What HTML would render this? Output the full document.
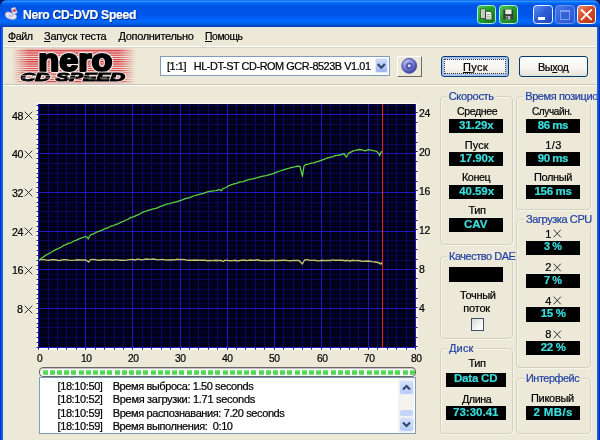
<!DOCTYPE html>
<html><head><meta charset="utf-8"><title>Nero CD-DVD Speed</title>
<style>
html,body{margin:0;padding:0}
body{width:600px;height:440px;overflow:hidden;position:relative;background:#ece9d8;font-family:"Liberation Sans","DejaVu Sans",sans-serif;font-size:11px;color:#000}
.abs{position:absolute}
.t{position:absolute;white-space:pre;transform-origin:0 0;-webkit-text-stroke:0.22px currentColor}
#title{position:absolute;left:0;top:0;width:600px;height:27px;border-radius:7px 7px 0 0;
background:linear-gradient(to bottom,#0058ee 0%,#3593ff 4%,#288eff 6%,#127dff 8%,#036ffc 10%,#0262ee 14%,#0057e5 20%,#0054e3 24%,#0055eb 56%,#005bf5 66%,#026afe 76%,#0062ef 86%,#0052d6 92%,#0048c4 96%,#003cae 100%)}
#bl,#br{position:absolute;top:27px;width:4px;height:413px}
#bl{left:0;width:3px;background:linear-gradient(to right,#0019cf,#0855dd 40%,#166aee)}#br{left:597.2px;width:2.8px;background:linear-gradient(to right,#166aee,#0855dd 50%,#001ea0)}
.sep{position:absolute;left:3px;width:593px;height:1px}
.grp{position:absolute;border:1px solid #d2d0be;border-radius:4px;box-shadow:inset 1px 1px 0 #f6f5ec,1px 1px 0 #f6f5ec}
.legbg{position:absolute;height:13px;background:#ece9d8}
.box{position:absolute;background:#000}
.chk{position:absolute;width:11px;height:11px;border:1px solid #3c5068;background:linear-gradient(135deg,#d8d8d2,#fff 80%)}
#prog{position:absolute;left:39px;top:367px;width:375px;height:8px;border:1px solid #686868;border-radius:4px;background:#fff;box-shadow:inset 0 1px 1px #bbb}
#pb{position:absolute;left:0;top:0;width:414.6px;height:440px;overflow:hidden}
#pb i{position:absolute;top:369.8px;width:5px;height:5.4px;background:linear-gradient(to bottom,#8ae88a,#48d448 50%,#78e278)}
#log{position:absolute;left:39px;top:377px;width:375px;height:55px;border:1px solid #7f9db9;background:#fff}
.btn{position:absolute;height:19px;border:1px solid #003c74;border-radius:3px;background:linear-gradient(to bottom,#fff 0%,#f6f5ef 60%,#e4e1d4 100%)}
</style></head><body>
<div id="wrap" style="position:absolute;left:0;top:0;width:600px;height:440px;will-change:transform">
<div class="abs" style="left:0;top:0;width:600px;height:10px;background:#0a1a60"></div><div id="title"></div>
<svg class="abs" style="left:4px;top:6px" width="16" height="16" viewBox="0 0 16 16">
<path d="M1 8.5c0-2 2-3 4-2.6l5 1.6c2 .8 3.4 2.4 2.4 4.4-1 1.800-4 2.200-6.400 1.400C3.200 12.500 1 11 1 8.500z" fill="#e4e4f0" stroke="#7a86c0" stroke-width="0.7"/>
<path d="M7 2.500l4-1.500 2.500 5.500-4.500 2.500z" fill="#f4f0f4" stroke="#8088b8" stroke-width="0.6"/>
<circle cx="10.300" cy="4.600" r="1.700" fill="#c8505a"/>
<ellipse cx="6.500" cy="10" rx="2.200" ry="1.200" fill="#c0c4dc"/>
</svg>
<div class="t" style="left:23.0px;top:6.3px;font-size:13.5px;line-height:18px;height:18px;letter-spacing:-0.35px;transform:scaleX(0.902);font-weight:bold;color:#fff;text-shadow:1px 1px 0 #0a2a7a;">Nero CD-DVD Speed</div>
<!-- title buttons -->
<div class="abs" style="left:477px;top:5px;width:17px;height:17px;border-radius:3.5px;background:linear-gradient(135deg,#4cc84e 0%,#24a02e 45%,#12781c 100%);border:1px solid #b0eedc"></div>
<div class="abs" style="left:499px;top:5px;width:17px;height:17px;border-radius:3.5px;background:linear-gradient(135deg,#4cc84e 0%,#24a02e 45%,#12781c 100%);border:1px solid #b0eedc"></div>
<svg class="abs" style="left:477px;top:5px" width="42" height="19" viewBox="477 5 42 19">
<rect x="480.6" y="9" width="5" height="9.4" fill="#f0f4e8" stroke="#1c4a1c" stroke-width="0.7"/>
<path d="M481.3 11h3.6M481.3 13h3.6M481.3 15h3.6M481.3 17h3.6" stroke="#7c8c78" stroke-width="0.8"/>
<path d="M485.6 11.2h4.4l2 2v6.8h-6.4z" fill="#f6f6ee" stroke="#183818" stroke-width="0.9"/>
<path d="M486.6 14.5h4.2M486.6 16.3h4.2M486.6 18.1h4.2" stroke="#8a9886" stroke-width="0.8"/>
<rect x="503.3" y="9.5" width="10" height="10" rx="0.6" fill="#3a4038"/>
<rect x="505.3" y="9.5" width="6.2" height="4.6" fill="#e6ece2"/>
<rect x="505.8" y="16" width="4.6" height="3.5" fill="#b4bcb0"/><rect x="506.5" y="16.6" width="1.4" height="2.4" fill="#3a4038"/>
</svg>
<div class="abs" style="left:533px;top:5px;width:18px;height:17px;border-radius:3.5px;border:1px solid #eef2ff;background:linear-gradient(135deg,#5c8cf4 0%,#2e5fd8 45%,#1e48bc 100%)"></div>
<div class="abs" style="left:538px;top:16.5px;width:6.5px;height:3.2px;background:#fff"></div>
<div class="abs" style="left:555px;top:5px;width:17.5px;height:17px;border-radius:3.5px;border:1px solid #6f95ec;background:linear-gradient(135deg,#4a7cec 0%,#3464dc 45%,#2a56cc 100%)"></div>
<div class="abs" style="left:559.5px;top:9.8px;width:8.8px;height:7.2px;border:1px solid #7d9ff0;border-top-width:2.2px"></div>
<div class="abs" style="left:576.5px;top:5px;width:17.5px;height:17px;border-radius:3.5px;border:1px solid #fff;background:linear-gradient(135deg,#ec8a68 0%,#d84c2a 45%,#b43412 100%)"></div>
<svg class="abs" style="left:576px;top:5px" width="20" height="19" viewBox="576 5 20 19"><path d="M581.6 10l9.6 9.4M591.2 10l-9.6 9.4" stroke="#fff" stroke-width="1.8" stroke-linecap="round"/></svg>
<!-- menu -->
<div class="t" style="left:8.0px;top:29.2px;font-size:11px;line-height:14px;height:14px;letter-spacing:-0.45px;transform:scaleX(0.971);"><u>Ф</u>айл</div>
<div class="t" style="left:44.0px;top:29.2px;font-size:11px;line-height:14px;height:14px;letter-spacing:-0.21px;"><u>З</u>апуск теста</div>
<div class="t" style="left:118.5px;top:29.2px;font-size:11px;line-height:14px;height:14px;letter-spacing:-0.32px;"><u>Д</u>ополнительно</div>
<div class="t" style="left:205.0px;top:29.2px;font-size:11px;line-height:14px;height:14px;letter-spacing:-0.45px;transform:scaleX(0.943);"><u>П</u>омощь</div>
<div class="sep" style="top:46px;background:#fff"></div>
<div class="sep" style="top:47px;background:#d8d4c4"></div>
<!-- logo -->
<svg class="abs" style="left:12px;top:48px" width="124" height="36" viewBox="0 0 124 36">
<defs><linearGradient id="fd" x1="0" x2="1" y1="0" y2="0"><stop offset="0" stop-color="#ece9d8" stop-opacity="1"/><stop offset="0.14" stop-color="#ece9d8" stop-opacity="0"/><stop offset="0.86" stop-color="#ece9d8" stop-opacity="0"/><stop offset="1" stop-color="#ece9d8" stop-opacity="1"/></linearGradient>
<pattern id="st" width="4" height="2.2" patternUnits="userSpaceOnUse"><rect width="4" height="2.2" fill="#f0e4e4"/><rect width="4" height="1.2" fill="#d83838"/></pattern></defs>
<rect x="0" y="0.800" width="124" height="34.400" fill="url(#st)"/>
<rect x="0" y="0" width="124" height="36" fill="url(#fd)"/>
<text x="26.3" y="23.4" font-family="Liberation Sans, sans-serif" font-weight="bold" font-size="31" textLength="74.2" lengthAdjust="spacingAndGlyphs" fill="#000" stroke="#f6ecec" stroke-width="4" stroke-linejoin="round">nero</text>
<text x="26.3" y="23.4" font-family="Liberation Sans, sans-serif" font-weight="bold" font-size="31" textLength="74.2" lengthAdjust="spacingAndGlyphs" fill="#000" stroke="#000" stroke-width="2.2" stroke-linejoin="round">nero</text>
<text x="8.5" y="33.3" font-family="Liberation Sans, sans-serif" font-weight="bold" font-style="italic" font-size="11.5" textLength="104.5" lengthAdjust="spacingAndGlyphs" fill="#000" stroke="#f4e8e8" stroke-width="2.4" stroke-linejoin="round">CD SPEED</text>
<text x="8.5" y="33.3" font-family="Liberation Sans, sans-serif" font-weight="bold" font-style="italic" font-size="11.5" textLength="104.5" lengthAdjust="spacingAndGlyphs" fill="#000" stroke="#000" stroke-width="1">CD SPEED</text>
<path d="M10 27.600h14M33 27.600h12M56 27.600h10M72 27.600h10M10 30h12M33 30h10M55 30h9M72 30h8M88 30h7M101 30h6" stroke="#f4ecec" stroke-width="0.7" opacity="0.85"/>
</svg>
<!-- combobox -->
<div class="abs" style="left:160px;top:56px;width:228px;height:18px;border:1px solid #7f9db9;background:#fff"></div>
<div class="t" style="left:167.0px;top:59.4px;font-size:11px;line-height:14px;height:14px;letter-spacing:-0.45px;transform:scaleX(0.991);">[1:1]&nbsp;&nbsp; HL-DT-ST CD-ROM GCR-8523B V1.01</div>
<div class="abs" style="left:374.5px;top:57.7px;width:13.5px;height:15.5px;border-radius:2px;background:linear-gradient(to bottom,#cfdcfc,#b4c8f6 60%,#98b0ea);box-shadow:inset 0 0 0 1px #e4ecfe"></div>
<svg class="abs" style="left:373px;top:58px" width="15" height="16"><path d="M4.700 6l3.600 3.800L11.900 6" stroke="#31456f" stroke-width="2.100" fill="none"/></svg>
<!-- cd button -->
<div class="abs" style="left:397px;top:56px;width:23px;height:18.500px;border-top:1px solid #fff;border-left:1px solid #fff;border-right:1.500px solid #6e6b60;border-bottom:1.500px solid #6e6b60;background:#ece9d8"></div>
<svg class="abs" style="left:400px;top:57px" width="18" height="18" viewBox="0 0 18 18"><defs><radialGradient id="cd" cx="0.380" cy="0.320" r="0.750"><stop offset="0" stop-color="#c4ccf4"/><stop offset="0.450" stop-color="#8088d8"/><stop offset="0.800" stop-color="#4a50b4"/><stop offset="1" stop-color="#34389a"/></radialGradient></defs>
<circle cx="9.200" cy="8.800" r="7.500" fill="url(#cd)" stroke="#3a3e9c" stroke-width="0.700"/><circle cx="9.200" cy="8.800" r="3.100" fill="#5a60bc" stroke="#3c409c" stroke-width="0.600"/><circle cx="9.200" cy="8.800" r="1.300" fill="#f4f4fc"/></svg>
<!-- buttons -->
<div class="btn" style="left:441px;top:56px;width:66px;box-shadow:inset 0 0 0 2px #a9c0f0"></div>
<div class="abs" style="left:444px;top:59px;width:60px;height:13px;border:1px dotted #333"></div>
<div class="btn" style="left:519px;top:56px;width:67px"></div>
<div class="t" style="left:463.0px;top:59.7px;font-size:11px;line-height:14px;height:14px;letter-spacing:0.35px;"><u>П</u>уск</div><div class="t" style="left:538.0px;top:59.7px;font-size:11px;line-height:14px;height:14px;letter-spacing:-0.45px;transform:scaleX(0.995);">Вы<u>х</u>од</div>
<div class="sep" style="top:84px;background:#c8c4b4"></div>
<div class="sep" style="top:85px;background:#fff"></div>
<!-- chart -->
<svg style="position:absolute;left:36px;top:102px" width="383" height="249" viewBox="36 102 383 249">
<rect x="36.5" y="102.8" width="381.2" height="246.8" fill="#fbfaf4"/>
<rect x="38.5" y="104" width="377.5" height="244" fill="#000016"/>
<path d="M36.6 347.5H38.5M36.6 342.5H38.5M36.6 337.5H38.5M36.6 332.5H38.5M36.6 327.5H38.5M36.6 323.5H38.5M36.6 318.5H38.5M36.6 313.5H38.5M36.6 308.5H38.5M36.6 303.5H38.5M36.6 298.5H38.5M36.6 294.5H38.5M36.6 289.5H38.5M36.6 284.5H38.5M36.6 279.5H38.5M36.6 274.5H38.5M36.6 269.5H38.5M36.6 265.5H38.5M36.6 260.5H38.5M36.6 255.5H38.5M36.6 250.5H38.5M36.6 245.5H38.5M36.6 240.5H38.5M36.6 235.5H38.5M36.6 231.5H38.5M36.6 226.5H38.5M36.6 221.5H38.5M36.6 216.5H38.5M36.6 211.5H38.5M36.6 206.5H38.5M36.6 202.5H38.5M36.6 197.5H38.5M36.6 192.5H38.5M36.6 187.5H38.5M36.6 182.5H38.5M36.6 177.5H38.5M36.6 173.5H38.5M36.6 168.5H38.5M36.6 163.5H38.5M36.6 158.5H38.5M36.6 153.5H38.5M36.6 148.5H38.5M36.6 144.5H38.5M36.6 139.5H38.5M36.6 134.5H38.5M36.6 129.5H38.5M36.6 124.5H38.5M36.6 119.5H38.5M36.6 114.5H38.5M36.6 110.5H38.5M36.6 105.5H38.5M38.5 348V349.6M48.5 348V349.6M57.5 348V349.6M66.5 348V349.6M76.5 348V349.6M85.5 348V349.6M95.5 348V349.6M104.5 348V349.6M114.5 348V349.6M123.5 348V349.6M132.5 348V349.6M142.5 348V349.6M151.5 348V349.6M161.5 348V349.6M170.5 348V349.6M180.5 348V349.6M189.5 348V349.6M198.5 348V349.6M208.5 348V349.6M217.5 348V349.6M227.5 348V349.6M236.5 348V349.6M245.5 348V349.6M255.5 348V349.6M264.5 348V349.6M274.5 348V349.6M283.5 348V349.6M293.5 348V349.6M302.5 348V349.6M311.5 348V349.6M321.5 348V349.6M330.5 348V349.6M340.5 348V349.6M349.5 348V349.6M358.5 348V349.6M368.5 348V349.6M377.5 348V349.6M387.5 348V349.6M396.5 348V349.6M406.5 348V349.6M415.5 348V349.6M416 346.5H417.6M416 337.5H417.6M416 327.5H417.6M416 317.5H417.6M416 307.5H417.6M416 298.5H417.6M416 288.5H417.6M416 278.5H417.6M416 268.5H417.6M416 259.5H417.6M416 249.5H417.6M416 239.5H417.6M416 229.5H417.6M416 220.5H417.6M416 210.5H417.6M416 200.5H417.6M416 190.5H417.6M416 181.5H417.6M416 171.5H417.6M416 161.5H417.6M416 151.5H417.6M416 142.5H417.6M416 132.5H417.6M416 122.5H417.6M416 112.5H417.6" stroke="#14146c" stroke-width="1" fill="none"/>
<path d="M38.5 342.5H416M38.5 332.5H416M38.5 323.5H416M38.5 313.5H416M38.5 303.5H416M38.5 294.5H416M38.5 284.5H416M38.5 274.5H416M38.5 265.5H416M38.5 255.5H416M38.5 245.5H416M38.5 235.5H416M38.5 226.5H416M38.5 216.5H416M38.5 206.5H416M38.5 197.5H416M38.5 187.5H416M38.5 177.5H416M38.5 168.5H416M38.5 158.5H416M38.5 148.5H416M38.5 139.5H416M38.5 129.5H416M38.5 119.5H416M38.5 110.5H416" stroke="#03033a" stroke-width="1" fill="none"/>
<path d="M48.5 104V348M57.5 104V348M66.5 104V348M76.5 104V348M95.5 104V348M104.5 104V348M114.5 104V348M123.5 104V348M142.5 104V348M151.5 104V348M161.5 104V348M170.5 104V348M189.5 104V348M198.5 104V348M208.5 104V348M217.5 104V348M236.5 104V348M245.5 104V348M255.5 104V348M264.5 104V348M283.5 104V348M293.5 104V348M302.5 104V348M311.5 104V348M330.5 104V348M340.5 104V348M349.5 104V348M358.5 104V348M377.5 104V348M387.5 104V348M396.5 104V348M406.5 104V348" stroke="#09096a" stroke-width="1" fill="none"/>
<path d="M38.5 337.5H416M38.5 327.5H416M38.5 318.5H416M38.5 298.5H416M38.5 289.5H416M38.5 279.5H416M38.5 260.5H416M38.5 250.5H416M38.5 240.5H416M38.5 221.5H416M38.5 211.5H416M38.5 202.5H416M38.5 182.5H416M38.5 173.5H416M38.5 163.5H416M38.5 144.5H416M38.5 134.5H416M38.5 124.5H416M38.5 105.5H416" stroke="#07075e" stroke-width="1" fill="none"/>
<path d="M38.5 104V348M85.5 104V348M132.5 104V348M180.5 104V348M227.5 104V348M274.5 104V348M321.5 104V348M368.5 104V348M415.5 104V348M38.5 347.5H416M38.5 308.5H416M38.5 269.5H416M38.5 231.5H416M38.5 192.5H416M38.5 153.5H416M38.5 114.5H416" stroke="#1e18c6" stroke-width="1" fill="none"/>
<polyline points="39,260 41.5,259.62 44,259.6 48,260.4 51.5,259.75 55,259.8 57.5,260.3 60,260.5 63.0,259.67 66,259.7 69.0,260.09 72,260.4 74.7,260.13 77.3,259.69 80,260 83.0,260.01 86,260 88.6,262 90.5,259.6 93.7,259.37 96.8,260.0 100,260.3 102.5,259.74 105.0,259.64 107.5,259.85 110,259.8 112.5,260.25 115.0,259.67 117.5,259.9 120,260.3 122.5,260.25 125.0,260.4 127.5,259.85 130,259.6 132.5,259.47 135.0,260.03 137.5,259.07 140,259.5 142.5,259.83 145.0,259.24 147.5,259.07 150,259.4 152.5,259.07 155.0,259.31 157.5,259.87 160,259.6 162.5,259.38 165.0,259.88 167.5,260.04 170,260 172.5,259.77 175.0,259.85 177.5,259.26 180,259.6 182.5,259.33 185.0,259.66 187.5,260.31 190,260.3 192.5,260.2 195.0,260.06 197.5,260.31 200,260.2 202.5,260.23 205.0,260.15 207.5,260.72 210,260.5 212.8,260.67 215.5,260.19 218.2,260.5 221,260.4 223,261.5 225,260.3 227.5,260.36 230.0,260.74 232.5,260.63 235.0,260.22 237.5,260.95 240,260.5 242.5,260.07 245.0,260.32 247.5,260.61 250.0,259.95 252.5,260.24 255,260.2 257.5,259.79 260.0,260.47 262.5,260.61 265.0,260.47 267.5,260.83 270,260.5 272.5,260.28 275.0,260.63 277.5,260.49 280.0,260.45 282.5,260.29 285,260.3 287.8,260.66 290.6,260.78 293.4,260.33 296.2,260.54 299,260.4 302.4,264 304.5,260 307.1,259.64 309.8,260.35 312.4,260.37 315,260.3 317.5,260.87 320.0,260.77 322.5,260.31 325,260.6 327.5,260.39 330.0,260.57 332.5,259.82 335,260.2 337.5,260.31 340.0,260.17 342.5,260.27 345,260.8 347.5,260.31 350.0,260.97 352.5,260.28 355,260.6 357.5,260.5 360.0,260.79 362.5,261.42 365,261.2 368.5,260.98 372,261.6 375.0,262.0 378,262.5 381,264 382,262.5" stroke="#c4c46c" stroke-width="1.4" fill="none" stroke-linejoin="round"/>
<polyline points="39,260 43,257.2 45.5,255.36 48,254 50.7,252.57 53.3,250.95 56,249.6 58.5,248.44 61.0,247.21 63.5,245.46 66,244.6 68.5,243.11 71.0,242.8 73.5,241.23 76,240.4 78.5,239.06 81,238.2 85.5,236.5 87,237.2 88.2,239 89.5,236.2 91,234.6 93.5,233.95 96,232.4 98.5,231.37 101.0,230.7 103.5,229.38 106,228.4 108.5,227.53 111.0,226.09 113.5,225.52 116,224.4 118.5,223.63 121.0,222.22 123.5,221.32 126,220 128.5,219.05 131.0,217.41 133.5,216.93 136,215.6 138.5,214.58 141.0,213.22 143.5,211.88 146,211.2 150,209.8 153.3,208.8 156.7,208.03 160,206.6 163.3,205.38 166.7,204.2 169.8,203.55 173,202.5 176.5,201.89 180,200.6 183.0,199.69 186,198.4 189.7,197.58 193.3,196 196.7,195.01 200,194.2 203.3,193.47 206.7,192.2 209.8,191.45 213,190.8 216.0,190.59 219,189.6 221.5,190.6 223,188.6 225.5,187.74 228,186.2 231.0,184.84 234.0,183.87 237,183.2 240.2,181.95 243.5,181.62 246.7,180.2 249.8,179.44 253,178.8 256.5,177.91 260,176.8 263.0,176.02 266,175.6 269.6,174.61 273.3,173.6 276.6,172.2 280,171 283.4,169.77 286.7,168.8 289.4,168.18 292,167.4 294.6,166.88 297.3,166.2 300,166.5 302.4,176.3 304,166 305.8,164.5 308.3,164.16 310.9,163.26 313.4,162.79 315.9,162.02 318.5,161.44 321,160.3 324.0,159.45 327.0,158.0 330,157.3 333.0,156.67 336,155.4 338.7,155.25 341.3,154.63 344,153.7 346.3,157.2 348.5,153.3 353.3,150.8 356.2,150.21 359.2,149.5 362,149.8 365,150.8 368.5,149.6 372,150.3 374.3,150.8 376.7,151.4 378.5,153.5 379.6,155.8 380.6,153.2 381.8,151.2" stroke="#5ed03e" stroke-width="1.3" fill="none" stroke-linejoin="round"/>
<path d="M382.6 104V348" stroke="#e62a2a" stroke-width="1"/>
</svg>
<div class="t" style="left:11.8px;top:108.6px;font-size:11px;line-height:14px;height:14px;letter-spacing:-0.45px;transform:scaleX(0.970);">48</div>
<svg class="abs" style="left:23.8px;top:110.9px" width="9" height="9"><path d="M0.7 0.7L8.3 8.3M8.3 0.7L0.7 8.3" stroke="#222" stroke-width="0.9"/></svg>
<div class="t" style="left:11.8px;top:147.3px;font-size:11px;line-height:14px;height:14px;letter-spacing:-0.45px;transform:scaleX(0.970);">40</div>
<svg class="abs" style="left:23.8px;top:149.6px" width="9" height="9"><path d="M0.7 0.7L8.3 8.3M8.3 0.7L0.7 8.3" stroke="#222" stroke-width="0.9"/></svg>
<div class="t" style="left:11.8px;top:186.0px;font-size:11px;line-height:14px;height:14px;letter-spacing:-0.45px;transform:scaleX(0.970);">32</div>
<svg class="abs" style="left:23.8px;top:188.3px" width="9" height="9"><path d="M0.7 0.7L8.3 8.3M8.3 0.7L0.7 8.3" stroke="#222" stroke-width="0.9"/></svg>
<div class="t" style="left:11.8px;top:224.7px;font-size:11px;line-height:14px;height:14px;letter-spacing:-0.45px;transform:scaleX(0.970);">24</div>
<svg class="abs" style="left:23.8px;top:227.0px" width="9" height="9"><path d="M0.7 0.7L8.3 8.3M8.3 0.7L0.7 8.3" stroke="#222" stroke-width="0.9"/></svg>
<div class="t" style="left:11.8px;top:263.4px;font-size:11px;line-height:14px;height:14px;letter-spacing:-0.45px;transform:scaleX(0.970);">16</div>
<svg class="abs" style="left:23.8px;top:265.8px" width="9" height="9"><path d="M0.7 0.7L8.3 8.3M8.3 0.7L0.7 8.3" stroke="#222" stroke-width="0.9"/></svg>
<div class="t" style="left:17.3px;top:302.2px;font-size:11px;line-height:14px;height:14px;letter-spacing:-0.45px;transform:scaleX(0.970);">8</div>
<svg class="abs" style="left:23.8px;top:304.5px" width="9" height="9"><path d="M0.7 0.7L8.3 8.3M8.3 0.7L0.7 8.3" stroke="#222" stroke-width="0.9"/></svg>
<div class="t" style="left:419.3px;top:106.0px;font-size:11px;line-height:14px;height:14px;letter-spacing:-0.45px;transform:scaleX(0.953);">24</div>
<div class="t" style="left:419.3px;top:145.0px;font-size:11px;line-height:14px;height:14px;letter-spacing:-0.45px;transform:scaleX(0.953);">20</div>
<div class="t" style="left:419.3px;top:184.0px;font-size:11px;line-height:14px;height:14px;letter-spacing:-0.45px;transform:scaleX(0.953);">16</div>
<div class="t" style="left:419.3px;top:223.0px;font-size:11px;line-height:14px;height:14px;letter-spacing:-0.45px;transform:scaleX(0.953);">12</div>
<div class="t" style="left:419.3px;top:262.0px;font-size:11px;line-height:14px;height:14px;letter-spacing:-0.45px;transform:scaleX(0.953);">8</div>
<div class="t" style="left:419.3px;top:301.0px;font-size:11px;line-height:14px;height:14px;letter-spacing:-0.45px;transform:scaleX(0.953);">4</div>
<div class="t" style="left:36.6px;top:350.8px;font-size:11px;line-height:14px;height:14px;letter-spacing:-0.45px;transform:scaleX(0.935);">0</div>
<div class="t" style="left:81.0px;top:350.8px;font-size:11px;line-height:14px;height:14px;letter-spacing:-0.45px;transform:scaleX(0.935);">10</div>
<div class="t" style="left:128.1px;top:350.8px;font-size:11px;line-height:14px;height:14px;letter-spacing:-0.45px;transform:scaleX(0.935);">20</div>
<div class="t" style="left:175.2px;top:350.8px;font-size:11px;line-height:14px;height:14px;letter-spacing:-0.45px;transform:scaleX(0.935);">30</div>
<div class="t" style="left:222.3px;top:350.8px;font-size:11px;line-height:14px;height:14px;letter-spacing:-0.45px;transform:scaleX(0.935);">40</div>
<div class="t" style="left:269.4px;top:350.8px;font-size:11px;line-height:14px;height:14px;letter-spacing:-0.45px;transform:scaleX(0.935);">50</div>
<div class="t" style="left:316.5px;top:350.8px;font-size:11px;line-height:14px;height:14px;letter-spacing:-0.45px;transform:scaleX(0.935);">60</div>
<div class="t" style="left:363.6px;top:350.8px;font-size:11px;line-height:14px;height:14px;letter-spacing:-0.45px;transform:scaleX(0.935);">70</div>
<div class="t" style="left:410.7px;top:350.8px;font-size:11px;line-height:14px;height:14px;letter-spacing:-0.45px;transform:scaleX(0.935);">80</div>
<!-- progress -->
<div id="prog"></div><div id="pb"><i style="left:42.5px"></i><i style="left:49.7px"></i><i style="left:56.9px"></i><i style="left:64.1px"></i><i style="left:71.3px"></i><i style="left:78.5px"></i><i style="left:85.7px"></i><i style="left:92.9px"></i><i style="left:100.1px"></i><i style="left:107.3px"></i><i style="left:114.5px"></i><i style="left:121.7px"></i><i style="left:128.9px"></i><i style="left:136.1px"></i><i style="left:143.3px"></i><i style="left:150.5px"></i><i style="left:157.7px"></i><i style="left:164.9px"></i><i style="left:172.1px"></i><i style="left:179.3px"></i><i style="left:186.5px"></i><i style="left:193.7px"></i><i style="left:200.9px"></i><i style="left:208.1px"></i><i style="left:215.3px"></i><i style="left:222.5px"></i><i style="left:229.7px"></i><i style="left:236.9px"></i><i style="left:244.1px"></i><i style="left:251.3px"></i><i style="left:258.5px"></i><i style="left:265.7px"></i><i style="left:272.9px"></i><i style="left:280.1px"></i><i style="left:287.3px"></i><i style="left:294.5px"></i><i style="left:301.7px"></i><i style="left:308.9px"></i><i style="left:316.1px"></i><i style="left:323.3px"></i><i style="left:330.5px"></i><i style="left:337.7px"></i><i style="left:344.9px"></i><i style="left:352.1px"></i><i style="left:359.3px"></i><i style="left:366.5px"></i><i style="left:373.7px"></i><i style="left:380.9px"></i><i style="left:388.1px"></i><i style="left:395.3px"></i><i style="left:402.5px"></i><i style="left:409.7px"></i></div>
<div id="log"></div>
<div class="t" style="left:57.5px;top:378.9px;font-size:11px;line-height:14px;height:14px;letter-spacing:-0.39px;">[18:10:50]</div>
<div class="t" style="left:112.7px;top:378.9px;font-size:11px;line-height:14px;height:14px;letter-spacing:-0.41px;">Время выброса: 1.50 seconds</div>
<div class="t" style="left:57.5px;top:392.3px;font-size:11px;line-height:14px;height:14px;letter-spacing:-0.39px;">[18:10:52]</div>
<div class="t" style="left:112.7px;top:392.3px;font-size:11px;line-height:14px;height:14px;letter-spacing:-0.29px;">Время загрузки: 1.71 seconds</div>
<div class="t" style="left:57.5px;top:405.7px;font-size:11px;line-height:14px;height:14px;letter-spacing:-0.39px;">[18:10:59]</div>
<div class="t" style="left:112.7px;top:405.7px;font-size:11px;line-height:14px;height:14px;letter-spacing:-0.39px;">Время распознавания: 7.20 seconds</div>
<div class="t" style="left:57.5px;top:419.1px;font-size:11px;line-height:14px;height:14px;letter-spacing:-0.39px;">[18:10:59]</div>
<div class="t" style="left:112.7px;top:419.1px;font-size:11px;line-height:14px;height:14px;letter-spacing:-0.40px;">Время выполнения:&nbsp; 0:10</div>
<!-- scrollbar -->
<div class="abs" style="left:398px;top:378px;width:16px;height:55px;background:#f4f3ee"></div>
<div class="abs" style="left:400px;top:381px;width:13px;height:13px;border-radius:2px;background:linear-gradient(to bottom,#d4e0fc,#b8ccf8);box-shadow:0 0 0 1px #e8eefc"></div>
<div class="abs" style="left:400px;top:418px;width:13px;height:13px;border-radius:2px;background:linear-gradient(to bottom,#d4e0fc,#b8ccf8);box-shadow:0 0 0 1px #e8eefc"></div>
<div class="abs" style="left:400px;top:410px;width:13px;height:6px;border-radius:2px;background:#c4d4fa"></div>
<svg class="abs" style="left:400px;top:381px" width="13" height="50"><path d="M3 8.5l3.5-3.5L10 8.5" stroke="#31456f" stroke-width="2" fill="none"/><path d="M3 41.5l3.5 3.5L10 41.5" stroke="#31456f" stroke-width="2" fill="none"/></svg>
<div class="grp" style="left:440px;top:96px;width:71px;height:147px"></div>
<div class="legbg" style="left:446.7px;top:89.5px;width:49.1px"></div><div class="t" style="left:448.7px;top:88.7px;font-size:11px;line-height:14px;height:14px;letter-spacing:-0.30px;color:#2342a4;">Скорость</div>
<div class="t" style="left:456.5px;top:104.2px;font-size:11px;line-height:14px;height:14px;letter-spacing:-0.45px;transform:scaleX(0.966);">Среднее</div>
<div class="t" style="left:464.8px;top:137.5px;font-size:11px;line-height:14px;height:14px;letter-spacing:0.03px;">Пуск</div>
<div class="t" style="left:462.3px;top:170.4px;font-size:11px;line-height:14px;height:14px;letter-spacing:-0.45px;transform:scaleX(0.980);">Конец</div>
<div class="t" style="left:468.5px;top:203.4px;font-size:11px;line-height:14px;height:14px;letter-spacing:-0.45px;">Тип</div>
<div class="box" style="left:449px;top:118.5px;width:54px;height:14.5px"></div><div class="t" style="left:459.0px;top:117.6px;font-size:11.5px;line-height:15px;height:15px;letter-spacing:-0.10px;font-weight:bold;color:#3cdcdc;">31.29x</div>
<div class="box" style="left:449px;top:152px;width:54px;height:14.300000000000011px"></div><div class="t" style="left:459.6px;top:151.0px;font-size:11.5px;line-height:15px;height:15px;letter-spacing:-0.13px;font-weight:bold;color:#3cdcdc;">17.90x</div>
<div class="box" style="left:449px;top:185px;width:54px;height:14px"></div><div class="t" style="left:459.3px;top:183.8px;font-size:11.5px;line-height:15px;height:15px;letter-spacing:-0.08px;font-weight:bold;color:#3cdcdc;">40.59x</div>
<div class="box" style="left:449px;top:218px;width:54px;height:14.300000000000011px"></div><div class="t" style="left:464.0px;top:217.0px;font-size:11.5px;line-height:15px;height:15px;letter-spacing:-0.04px;font-weight:bold;color:#3cdcdc;">CAV</div>
<div class="grp" style="left:516px;top:96px;width:72.5px;height:111.5px"></div>
<div class="legbg" style="left:523.2px;top:89.5px;width:76.8px"></div><div class="t" style="left:525.2px;top:88.7px;font-size:11px;line-height:14px;height:14px;letter-spacing:-0.39px;color:#2342a4;">Время позицио</div>
<div class="t" style="left:532.0px;top:104.2px;font-size:11px;line-height:14px;height:14px;letter-spacing:-0.45px;transform:scaleX(0.915);">Случайн.</div>
<div class="t" style="left:545.3px;top:137.5px;font-size:11px;line-height:14px;height:14px;letter-spacing:0.37px;">1/3</div>
<div class="t" style="left:534.0px;top:170.4px;font-size:11px;line-height:14px;height:14px;letter-spacing:-0.39px;">Полный</div>
<div class="box" style="left:525.5px;top:118.5px;width:54.0px;height:14.5px"></div><div class="t" style="left:537.8px;top:117.6px;font-size:11.5px;line-height:15px;height:15px;letter-spacing:-0.48px;font-weight:bold;color:#3cdcdc;">86 ms</div>
<div class="box" style="left:525.5px;top:152px;width:54.0px;height:14.300000000000011px"></div><div class="t" style="left:537.8px;top:151.0px;font-size:11.5px;line-height:15px;height:15px;letter-spacing:-0.48px;font-weight:bold;color:#3cdcdc;">90 ms</div>
<div class="box" style="left:525.5px;top:185px;width:54.0px;height:14px"></div><div class="t" style="left:534.5px;top:183.8px;font-size:11.5px;line-height:15px;height:15px;letter-spacing:-0.33px;font-weight:bold;color:#3cdcdc;">156 ms</div>
<div class="grp" style="left:516px;top:219px;width:72.5px;height:147px"></div>
<div class="legbg" style="left:524px;top:213px;width:69.8px"></div><div class="t" style="left:526.0px;top:212.2px;font-size:11px;line-height:14px;height:14px;letter-spacing:-0.41px;color:#2342a4;">Загрузка CPU</div>
<div class="t" style="left:545.3px;top:226.9px;font-size:11px;line-height:14px;height:14px;letter-spacing:-0.32px;">1</div><svg class="abs" style="left:552.8000000000001px;top:229.4px" width="9" height="9"><path d="M0.7 0.7L7.8 8.3M7.8 0.7L0.7 8.3" stroke="#222" stroke-width="0.9"/></svg>
<div class="box" style="left:525.5px;top:240.5px;width:54.0px;height:14.0px"></div><div class="t" style="left:543.7px;top:239.3px;font-size:11.5px;line-height:15px;height:15px;letter-spacing:-0.50px;transform:scaleX(0.950);font-weight:bold;color:#3cdcdc;">3 %</div>
<div class="t" style="left:545.3px;top:260.3px;font-size:11px;line-height:14px;height:14px;letter-spacing:-0.32px;">2</div><svg class="abs" style="left:552.8000000000001px;top:262.8px" width="9" height="9"><path d="M0.7 0.7L7.8 8.3M7.8 0.7L0.7 8.3" stroke="#222" stroke-width="0.9"/></svg>
<div class="box" style="left:525.5px;top:273.5px;width:54.0px;height:14.5px"></div><div class="t" style="left:543.7px;top:272.6px;font-size:11.5px;line-height:15px;height:15px;letter-spacing:-0.50px;transform:scaleX(0.950);font-weight:bold;color:#3cdcdc;">7 %</div>
<div class="t" style="left:545.3px;top:293.7px;font-size:11px;line-height:14px;height:14px;letter-spacing:-0.32px;">4</div><svg class="abs" style="left:552.8000000000001px;top:296.2px" width="9" height="9"><path d="M0.7 0.7L7.8 8.3M7.8 0.7L0.7 8.3" stroke="#222" stroke-width="0.9"/></svg>
<div class="box" style="left:525.5px;top:307.0px;width:54.0px;height:14.5px"></div><div class="t" style="left:540.7px;top:306.1px;font-size:11.5px;line-height:15px;height:15px;letter-spacing:-0.33px;font-weight:bold;color:#3cdcdc;">15 %</div>
<div class="t" style="left:545.3px;top:327.1px;font-size:11px;line-height:14px;height:14px;letter-spacing:-0.32px;">8</div><svg class="abs" style="left:552.8000000000001px;top:329.6px" width="9" height="9"><path d="M0.7 0.7L7.8 8.3M7.8 0.7L0.7 8.3" stroke="#222" stroke-width="0.9"/></svg>
<div class="box" style="left:525.5px;top:340.5px;width:54.0px;height:14.5px"></div><div class="t" style="left:540.7px;top:339.6px;font-size:11.5px;line-height:15px;height:15px;letter-spacing:-0.33px;font-weight:bold;color:#3cdcdc;">22 %</div>
<div class="grp" style="left:440px;top:255.5px;width:71px;height:81.0px"></div>
<div class="legbg" style="left:447.2px;top:249.3px;width:68.2px"></div><div class="t" style="left:449.2px;top:248.5px;font-size:11px;line-height:14px;height:14px;letter-spacing:-0.45px;transform:scaleX(0.993);color:#2342a4;">Качество DAE</div>
<div class="box" style="left:449px;top:267px;width:54px;height:15px"></div>
<div class="t" style="left:460.0px;top:288.2px;font-size:11px;line-height:14px;height:14px;letter-spacing:-0.35px;">Точный</div>
<div class="t" style="left:463.3px;top:300.8px;font-size:11px;line-height:14px;height:14px;letter-spacing:-0.20px;">поток</div>
<div class="chk" style="left:471px;top:318px"></div>
<div class="grp" style="left:440px;top:348px;width:71px;height:84px"></div>
<div class="legbg" style="left:447px;top:342px;width:28.5px"></div><div class="t" style="left:449.0px;top:341.2px;font-size:11px;line-height:14px;height:14px;letter-spacing:0.15px;color:#2342a4;">Диск</div>
<div class="t" style="left:468.5px;top:356.2px;font-size:11px;line-height:14px;height:14px;letter-spacing:-0.45px;">Тип</div>
<div class="box" style="left:446px;top:372.5px;width:59.5px;height:14.0px"></div><div class="t" style="left:454.0px;top:371.3px;font-size:11.5px;line-height:15px;height:15px;letter-spacing:-0.20px;font-weight:bold;color:#3cdcdc;">Data CD</div>
<div class="t" style="left:462.3px;top:391.7px;font-size:11px;line-height:14px;height:14px;letter-spacing:-0.45px;transform:scaleX(0.975);">Длина</div>
<div class="box" style="left:446px;top:406.3px;width:59.5px;height:14.199999999999989px"></div><div class="t" style="left:453.0px;top:405.2px;font-size:11.5px;line-height:15px;height:15px;letter-spacing:0.01px;font-weight:bold;color:#3cdcdc;">73:30.41</div>
<div class="grp" style="left:516px;top:378px;width:73px;height:54px"></div>
<div class="legbg" style="left:523.5px;top:371.8px;width:57.2px"></div><div class="t" style="left:525.5px;top:371.0px;font-size:11px;line-height:14px;height:14px;letter-spacing:-0.45px;transform:scaleX(0.987);color:#2342a4;">Интерфейс</div>
<div class="t" style="left:531.0px;top:390.7px;font-size:11px;line-height:14px;height:14px;letter-spacing:-0.29px;">Пиковый</div>
<div class="box" style="left:525.5px;top:406px;width:54.0px;height:14px"></div><div class="t" style="left:533.6px;top:404.8px;font-size:11.5px;line-height:15px;height:15px;letter-spacing:0.34px;font-weight:bold;color:#3cdcdc;">2 MB/s</div>
<div id="bl"></div><div id="br"></div>
</div>
</body></html>
